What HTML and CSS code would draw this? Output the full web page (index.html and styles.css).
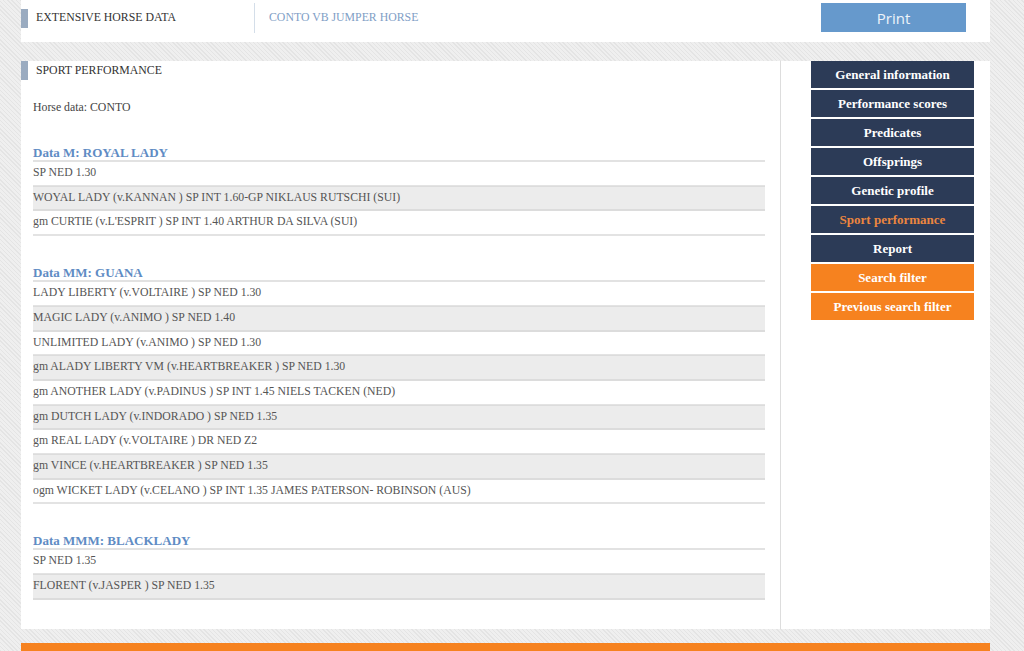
FILE: index.html
```html
<!DOCTYPE html>
<html>
   <head>
      <meta charset="UTF-8">
      <meta name="viewport" content="width=device-width, initial-scale=1.0"/>
      <title>Extensive horse data - CONTO</title>
      <link rel="stylesheet" href="styles.css">
   </head>
   <body>
      <div class="page">
         <div class="top-bar">
            <div class="top-title">EXTENSIVE HORSE DATA</div>
            <div class="top-horse">CONTO VB JUMPER HORSE</div>
            <button class="print-button">Print</button>
         </div>

         <div class="main-panel">
            <div class="content">
               <h2 class="section-title">SPORT PERFORMANCE</h2>

               <div class="content-inner">
                  <p class="horse-data">Horse data: CONTO</p>

                  <h3 class="data-heading">Data M: ROYAL LADY</h3>
                  <div class="data-row">SP NED 1.30</div>
                  <div class="data-row odd">WOYAL LADY (v.KANNAN ) SP INT 1.60-GP NIKLAUS RUTSCHI (SUI)</div>
                  <div class="data-row">gm CURTIE (v.L'ESPRIT ) SP INT 1.40 ARTHUR DA SILVA (SUI)</div>

                  <h3 class="data-heading">Data MM: GUANA</h3>
                  <div class="data-row">LADY LIBERTY (v.VOLTAIRE ) SP NED 1.30</div>
                  <div class="data-row odd">MAGIC LADY (v.ANIMO ) SP NED 1.40</div>
                  <div class="data-row">UNLIMITED LADY (v.ANIMO ) SP NED 1.30</div>
                  <div class="data-row odd">gm ALADY LIBERTY VM (v.HEARTBREAKER ) SP NED 1.30</div>
                  <div class="data-row">gm ANOTHER LADY (v.PADINUS ) SP INT 1.45 NIELS TACKEN (NED)</div>
                  <div class="data-row odd">gm DUTCH LADY (v.INDORADO ) SP NED 1.35</div>
                  <div class="data-row">gm REAL LADY (v.VOLTAIRE ) DR NED Z2</div>
                  <div class="data-row odd">gm VINCE (v.HEARTBREAKER ) SP NED 1.35</div>
                  <div class="data-row">ogm WICKET LADY (v.CELANO ) SP INT 1.35 JAMES PATERSON- ROBINSON (AUS)</div>

                  <h3 class="data-heading">Data MMM: BLACKLADY</h3>
                  <div class="data-row">SP NED 1.35</div>
                  <div class="data-row odd">FLORENT (v.JASPER ) SP NED 1.35</div>
               </div>
            </div>

            <div class="sidebar">
               <a href="#" class="side-button">General information</a>
               <a href="#" class="side-button">Performance scores</a>
               <a href="#" class="side-button">Predicates</a>
               <a href="#" class="side-button">Offsprings</a>
               <a href="#" class="side-button">Genetic profile</a>
               <a href="#" class="side-button active">Sport performance</a>
               <a href="#" class="side-button">Report</a>
               <a href="#" class="side-button orange">Search filter</a>
               <a href="#" class="side-button orange">Previous search filter</a>
            </div>
         </div>

         <div class="footer-bar"></div>
      </div>
   </body>
</html>
```

FILE: styles.css
```css
*
{
   box-sizing: border-box;
}

html,
body
{
   margin: 0;
   padding: 0;
}

body
{
   background-color: #ebebeb;
   background-image: repeating-linear-gradient(45deg, #e4e4e4 0, #e4e4e4 1px, #efefef 1px, #efefef 3px);
   font-family: "Liberation Serif", "Times New Roman", serif;
   font-size: 12px;
   color: #555555;
}

.page
{
   width: 969px;
   margin-left: 21px;
}

/* top bar */

.top-bar
{
   display: flex;
   align-items: flex-start;
   height: 42px;
   background: #ffffff;
}

.top-title
{
   width: 233px;
   height: 19px;
   margin-top: 9px;
   padding-left: 8px;
   border-left: 7px solid #9aabc0;
   font-size: 11.8px;
   line-height: 17px;
   color: #333333;
}

.top-horse
{
   height: 30px;
   margin-top: 3px;
   padding-left: 14px;
   border-left: 1px solid #d4dee9;
   font-size: 11.8px;
   line-height: 28px;
   color: #7f9ec6;
}

.print-button
{
   width: 145px;
   height: 29px;
   margin: 3px 24px 0 auto;
   border: 0;
   background: #6699cc;
   color: #eef4fa;
   font-family: "Open Sans", sans-serif;
   font-size: 15px;
   line-height: 29px;
   cursor: pointer;
}

/* main panel */

.main-panel
{
   display: flex;
   height: 568px;
   margin-top: 19px;
   background: #ffffff;
}

.content
{
   width: 760px;
   border-right: 1px solid #dddddd;
}

.section-title
{
   height: 19px;
   margin: 0;
   padding-left: 8px;
   border-left: 7px solid #9aabc0;
   font-size: 11.8px;
   font-weight: normal;
   line-height: 18px;
   color: #333333;
}

.content-inner
{
   padding: 0 15px 0 12px;
}

.horse-data
{
   margin: 19px 0 0 0;
   font-size: 11.8px;
   line-height: 16px;
   color: #444444;
}

.data-heading
{
   margin: 29px 0 0 0;
   border-bottom: 2px solid #e2e2e2;
   font-size: 13px;
   line-height: 15px;
   color: #5f8cc4;
}

.horse-data + .data-heading
{
   margin-top: 30px;
}

.data-row
{
   font-size: 11.75px;
   line-height: 22.7px;
   border-bottom: 2px solid #e3e3e3;
   white-space: nowrap;
}

.data-row.odd
{
   background: #ececec;
   border-bottom-color: #dcdcdc;
   box-shadow: 0 -1px 0 #dcdcdc;
}

/* sidebar */

.sidebar
{
   display: flex;
   flex-direction: column;
   flex: 1;
   padding: 0 16px 0 30px;
}

.side-button
{
   display: block;
   height: 27px;
   margin-bottom: 2px;
   background: #2c3b57;
   color: #ffffff;
   font-size: 13px;
   font-weight: bold;
   line-height: 27px;
   text-align: center;
   text-decoration: none;
}

.side-button.active
{
   color: #eb863f;
}

.side-button.orange
{
   background: #f6821f;
}

/* footer */

.footer-bar
{
   height: 8px;
   margin-top: 14px;
   background: #f6821f;
}
```
